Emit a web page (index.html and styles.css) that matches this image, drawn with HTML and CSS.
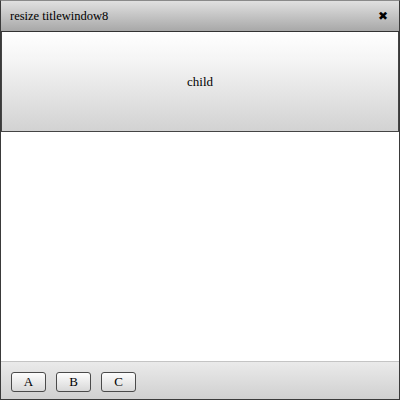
FILE: index.html
```html
<!DOCTYPE html>
<html>
<head>
<meta charset="utf-8">
<link rel="stylesheet" href="styles.css">
</head>
<body>
<div class="window">
  <div class="titlebar">
    <span class="title">resize titlewindow8</span>
    <span class="close">&#x2716;</span>
  </div>
  <div class="content">
    <div class="child">child</div>
  </div>
  <div class="controlbar">
    <button class="btn">A</button>
    <button class="btn">B</button>
    <button class="btn">C</button>
  </div>
</div>
</body>
</html>
```
FILE: styles.css
```css
html, body { margin: 0; padding: 0; }
body { width: 400px; height: 400px; background: #fff; font-family: "Liberation Serif", "Times New Roman", serif; }
.window {
  box-sizing: border-box;
  width: 400px; height: 400px;
  border: 1px solid #3a3a3a;
  border-top-color: #8a8a8a;
  display: flex; flex-direction: column;
  background: #fff;
}
.titlebar {
  height: 30px;
  flex: none;
  border-bottom: 1px solid #333;
  background: linear-gradient(#e0e0e0, #a8a8a8);
  display: flex; align-items: center; justify-content: space-between;
  padding: 0 11px 0 9px;
}
.title { font-size: 12.5px; color: #000; }
.close { font-size: 12px; font-family: "DejaVu Sans", sans-serif; font-weight: bold; color: #000; }
.content { flex: 1; display: flex; flex-direction: column; }
.child {
  box-sizing: border-box;
  height: 100px;
  border: 1px solid #444;
  border-top: none;
  background: linear-gradient(#ffffff, #f4f4f4 30%, #d2d2d2);
  display: flex; align-items: center; justify-content: center;
  font-size: 13px;
}
.controlbar {
  height: 35px; flex: none;
  border-top: 1px solid #c4c4c4;
  background: linear-gradient(#eaeaea, #d0d0d0);
  display: flex; align-items: center; gap: 10px;
  padding: 2px 0 0 10px;
}
.btn {
  box-sizing: border-box;
  width: 35px; height: 20px;
  margin: 0; padding: 0;
  border: 1px solid #4a4a4a;
  border-radius: 3px;
  background: linear-gradient(#fdfdfd, #d8d8d8);
  font-family: "Liberation Serif", serif;
  font-size: 13px;
  color: #000;
}
```
